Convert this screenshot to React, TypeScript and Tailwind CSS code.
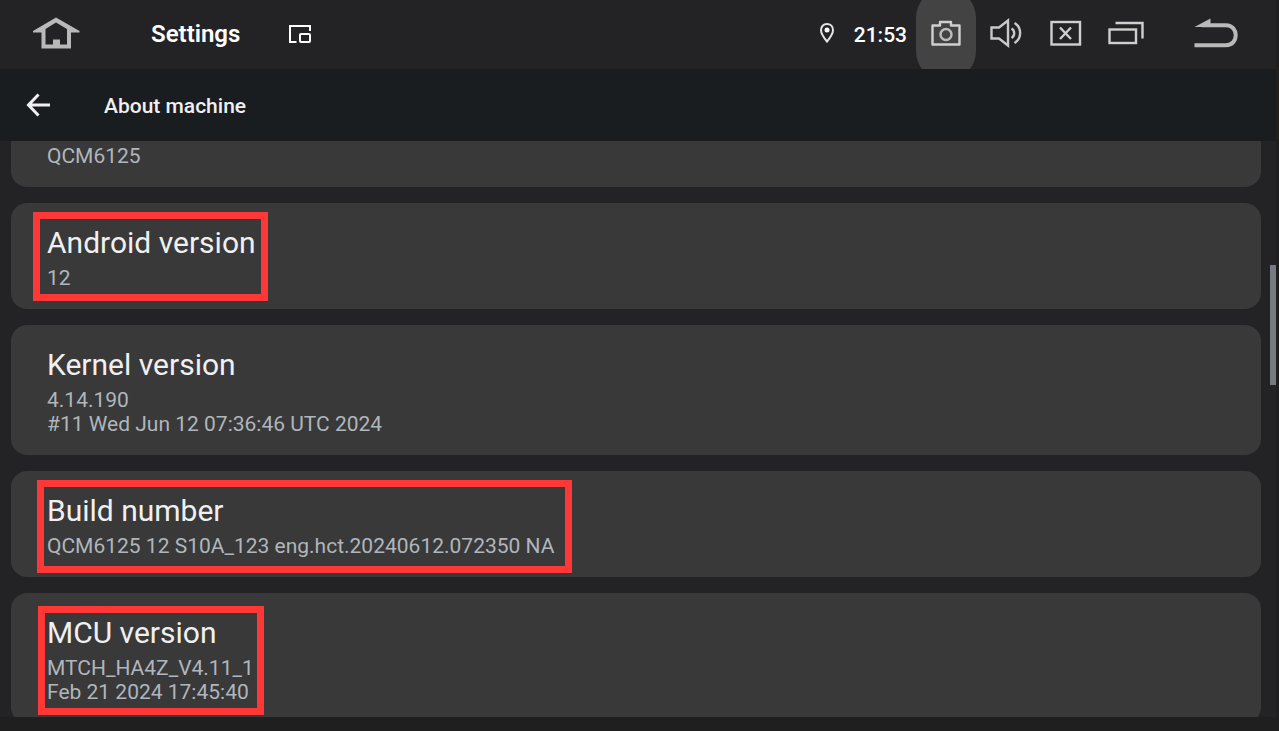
import clsx from "clsx";
import type { ReactNode } from "react";

interface InfoItem {
  title?: string;
  lines: string[];
  // outline drawn around the text of the card
  mark?: string;
}

const items: InfoItem[] = [
  { lines: ["QCM6125"] },
  {
    title: "Android version",
    lines: ["12"],
    mark: "-top-[13px] -right-[12px] -bottom-[11px] -left-[14px]",
  },
  {
    title: "Kernel version",
    lines: ["4.14.190", "#11 Wed Jun 12 07:36:46 UTC 2024"],
  },
  {
    title: "Build number",
    lines: ["QCM6125 12 S10A_123 eng.hct.20240612.072350 NA"],
    mark: "-top-[13px] -right-[18px] -bottom-[15px] -left-[10px]",
  },
  {
    title: "MCU version",
    lines: ["MTCH_HA4Z_V4.11_1", "Feb 21 2024 17:45:40"],
    mark: "-top-[9px] -right-[10px] -bottom-[11px] -left-[9px]",
  },
];

function HomeIcon() {
  return (
    <svg width="48" height="32" viewBox="0 0 48 32" fill="#b9b9b9">
      <path
        fillRule="evenodd"
        d="M24 0.500 47.500 14v1.500H39V31.500H9.500V15.500H1V14ZM24 5.500 13.500 12v15.500H21V22.500h7V27.500h7V12Z"
      />
    </svg>
  );
}

function WindowIcon() {
  return (
    <svg width="24" height="20" viewBox="0 0 24 20" fill="none" stroke="#fff" strokeWidth="2">
      <path d="M8.500 18H2V2h20v5" />
      <rect x="12" y="10" width="10" height="8" rx="1" />
    </svg>
  );
}

function PinIcon() {
  return (
    <svg width="16" height="22" viewBox="0 0 16 22">
      <path
        d="M8 2C4.400 2 2 4.700 2 8.200c0 3.400 3 7.600 6 11.300 3-3.700 6-7.900 6-11.300C14 4.700 11.600 2 8 2Z"
        fill="none"
        stroke="#e4e4e4"
        strokeWidth="2"
      />
      <circle cx="8" cy="8" r="2.500" fill="#fff" />
    </svg>
  );
}

function CameraIcon() {
  return (
    <svg width="32" height="26" viewBox="0 0 32 26" fill="none" stroke="#d0d0d0" strokeWidth="2.400">
      <path d="M2.500 5.500H10V2h11v3.500h8.500V24.500h-27Z" strokeLinejoin="round" />
      <circle cx="16" cy="14.500" r="5.500" stroke="#bdbdbd" />
    </svg>
  );
}

function VolumeIcon() {
  return (
    <svg width="32" height="30" viewBox="0 0 32 30" fill="none" stroke="#c8c8c8" strokeWidth="2.400">
      <path d="M1.500 9.500H9L18 2.500v25l-9-7H1.500Z" />
      <path d="M21.500 10.500c3.600 2 3.600 7.500 0 9.500" />
      <path d="M24.500 5c7.500 4.500 7.500 15.500 0 20" />
    </svg>
  );
}

function CloseIcon() {
  return (
    <svg width="32" height="26" viewBox="0 0 32 26" fill="none" stroke="#cfcfcf" strokeWidth="2.400">
      <rect x="1.500" y="2" width="28.500" height="22.500" />
      <path d="M10 7.500l11 11.500M21 7.500l-11 11.500" />
    </svg>
  );
}

function RecentIcon() {
  return (
    <svg width="36" height="24" viewBox="0 0 36 24" fill="none" stroke="#cfcfcf" strokeWidth="2.400">
      <path d="M7.500 2H34.500v15.500" />
      <rect x="1.500" y="8.500" width="26.500" height="13.500" />
    </svg>
  );
}

function ReturnIcon() {
  return (
    <svg width="44" height="30" viewBox="0 0 44 30">
      <path d="M0.500 9 16.500 0.500V9Z" fill="#b9b9b9" />
      <path d="M8 7.200h24c13 0 13 20 0 20H0.500" fill="none" stroke="#b9b9b9" strokeWidth="4" />
    </svg>
  );
}

interface BarButtonProps {
  label: string;
  active?: boolean;
  wide?: boolean;
  children: ReactNode;
}

function BarButton({ label, active, wide, children }: BarButtonProps) {
  return (
    <button
      type="button"
      aria-label={label}
      className={clsx(
        "relative flex h-full items-center justify-center overflow-hidden pb-1",
        wide ? "w-[120px]" : "w-[60px]",
      )}
    >
      {active && <span className="absolute inset-x-0 -inset-y-3 rounded-full bg-[#434344]" />}
      <span className="relative">{children}</span>
    </button>
  );
}

function StatusBar() {
  return (
    <div className="flex h-[69px] shrink-0 items-center bg-[#232325] text-white">
      <button type="button" aria-label="Home" className="flex h-full w-[112px] items-center justify-center pb-1">
        <HomeIcon />
      </button>
      <span className="mb-0.5 ml-[39px] text-[24px] leading-7 font-semibold">Settings</span>
      <button type="button" aria-label="Window" className="mb-0.5 ml-12">
        <WindowIcon />
      </button>
      <div className="ml-auto flex h-full items-center">
        <span className="mb-1">
          <PinIcon />
        </span>
        <time className="mr-[9px] ml-[19px] text-[21px] leading-7 font-medium">21:53</time>
        <BarButton label="Screenshot" active>
          <CameraIcon />
        </BarButton>
        <BarButton label="Volume">
          <VolumeIcon />
        </BarButton>
        <BarButton label="Close">
          <CloseIcon />
        </BarButton>
        <BarButton label="Recent">
          <RecentIcon />
        </BarButton>
        <BarButton label="Return" wide>
          <ReturnIcon />
        </BarButton>
      </div>
    </div>
  );
}

function InfoCard({ item }: { item: InfoItem }) {
  return (
    <section
      className={clsx(
        "shrink-0 bg-[#393939] px-9 pb-[19px]",
        item.title ? "rounded-2xl pt-[22px]" : "rounded-b-2xl pt-[3px]",
      )}
    >
      <div className="relative w-fit">
        {item.title && <h2 className="mb-[5px] text-[30px] leading-9 text-[#f0f0f0]">{item.title}</h2>}
        {item.lines.map((line) => (
          <p key={line} className="text-[21px] leading-6 text-[#b0b6bc]">
            {line}
          </p>
        ))}
        {item.mark && <span className={clsx("absolute border-7 border-[#ff3737]", item.mark)} />}
      </div>
    </section>
  );
}

export default function App() {
  return (
    <div className="flex h-screen flex-col bg-[#1f1f1f] pr-[3px] pb-[14px] font-[Roboto,sans-serif]">
      <StatusBar />
      <header className="flex h-[72px] shrink-0 items-center bg-[#1a1d20]">
        <button type="button" aria-label="Back" className="ml-[26px]">
          <svg width="26" height="24" viewBox="0 0 26 24" fill="none" stroke="#f0f0f0" strokeWidth="3">
            <path d="M12.500 1.500 2.500 12l10 10.500M2 12H24" />
          </svg>
        </button>
        <h1 className="mt-0.5 ml-[52px] text-[21px] leading-6 font-medium text-[#f0f0f0]">About machine</h1>
      </header>
      <main className="relative flex min-h-0 flex-1 flex-col gap-4 overflow-hidden bg-[#232326] pr-[15px] pl-[11px]">
        {items.map((item) => (
          <InfoCard key={item.lines[0]} item={item} />
        ))}
        <span className="absolute top-[124px] right-0 h-[120px] w-[6px] bg-[#777b81]" />
      </main>
    </div>
  );
}
